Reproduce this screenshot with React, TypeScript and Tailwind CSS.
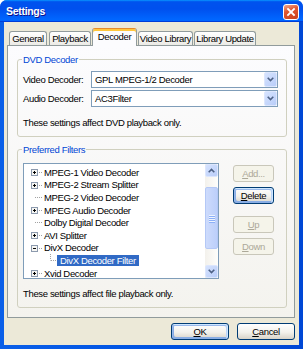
import React from "react";

const FONT =
  "font-['Liberation_Sans',Arial,sans-serif] text-[9.5px] leading-[11px] tracking-[-0.35px] text-black";

function Chevron({ up = false, color = "#4d6185" }: { up?: boolean; color?: string }) {
  return (
    <svg width="7" height="5" viewBox="0 0 7 5" className={up ? "rotate-180" : ""}>
      <path d="M0.7 0.8 L3.5 3.6 L6.3 0.8" fill="none" stroke={color} strokeWidth="1.6" />
    </svg>
  );
}

function CloseButton() {
  return (
    <div className="w-[16px] h-[16px] mt-[2px] rounded-[3px] border border-white flex items-center justify-center bg-[linear-gradient(160deg,#f0a78e,#e0562f_40%,#c9421d)]">
      <svg width="10" height="10" viewBox="0 0 10 10">
        <path d="M2 2 L8 8 M8 2 L2 8" stroke="white" strokeWidth="1.8" strokeLinecap="square" />
      </svg>
    </div>
  );
}

function Tab({ label, selected, w }: { label: string; selected?: boolean; w: string }) {
  if (selected) {
    return (
      <div
        className={`${w} h-[18px] -mb-px relative z-10 flex items-center justify-center pb-[2px] border border-b-0 border-[#919b9c] border-t-[#e68b2c] rounded-t-[3px] bg-[#fcfcfe] shadow-[inset_0_2px_#ffc73c]`}
      >
        {label}
      </div>
    );
  }
  return (
    <div
      className={`${w} h-[14px] flex items-center justify-center border border-b-0 border-[#919b9c] rounded-t-[3px] bg-[linear-gradient(180deg,#ffffff,#ecebe6)]`}
    >
      {label}
    </div>
  );
}

function Select({ value }: { value: string }) {
  return (
    <div className="h-[17px] border border-[#7f9db9] bg-white flex items-center">
      <span className="flex-1 pl-[3px] truncate">{value}</span>
      <div className="w-[13px] h-[15px] rounded-[2px] border border-[#dce6fd] bg-[linear-gradient(135deg,#d6e3fe,#b9cdf9)] flex items-center justify-center">
        <Chevron />
      </div>
    </div>
  );
}

function XPButton({
  children,
  disabled,
  focus,
  className = "",
}: {
  children: React.ReactNode;
  disabled?: boolean;
  focus?: boolean;
  className?: string;
}) {
  const base = "h-[17px] flex items-center justify-center rounded-[3px] border";
  const look = disabled
    ? "border-[#c9c7ba] text-[#aca899] bg-[#f5f4ea]"
    : "border-[#003c74] bg-[linear-gradient(180deg,#ffffff,#f3f2ec_55%,#d8d3c8)]";
  const glow = focus
    ? "shadow-[inset_-1px_1px_#cee7ff,inset_1px_2px_#98b8ea,inset_-2px_2px_#bcd4f6,inset_1px_-1px_#89ade4,inset_2px_-2px_#89ade4]"
    : "";
  return <div className={`${base} ${look} ${glow} ${className}`}>{children}</div>;
}

type Row = { label: string; exp?: "+" | "-"; child?: boolean; selected?: boolean };

const rows: Row[] = [
  { label: "MPEG-1 Video Decoder", exp: "+" },
  { label: "MPEG-2 Stream Splitter", exp: "+" },
  { label: "MPEG-2 Video Decoder" },
  { label: "MPEG Audio Decoder", exp: "+" },
  { label: "Dolby Digital Decoder" },
  { label: "AVI Splitter", exp: "+" },
  { label: "DivX Decoder", exp: "-" },
  { label: "DivX Decoder Filter", child: true, selected: true },
  { label: "Xvid Decoder", exp: "+" },
];

const RH = 12.6;

function Connector({ row }: { row: Row }) {
  const cy = 6.5;
  if (row.child) {
    return (
      <svg width="33" height={RH} viewBox={`0 0 33 ${RH}`} className="shrink-0">
        <line x1="26.5" y1="0" x2="26.5" y2={cy} stroke="#a0a0a0" strokeDasharray="1 1" />
        <line x1="27" y1={cy} x2="33" y2={cy} stroke="#a0a0a0" strokeDasharray="1 1" />
      </svg>
    );
  }
  return (
    <svg width="20" height={RH} viewBox={`0 0 20 ${RH}`} className="shrink-0">
      <line x1="11" y1={cy} x2="19" y2={cy} stroke="#a0a0a0" strokeDasharray="1 1" />
      {row.exp && (
        <g>
          <rect x="7.5" y="3.5" width="6" height="6" fill="#f6f6f3" stroke="#8c9aae" />
          <line x1="9" y1={cy} x2="12" y2={cy} stroke="#000" />
          {row.exp === "+" && <line x1="10.5" y1="5" x2="10.5" y2="8" stroke="#000" />}
        </g>
      )}
    </svg>
  );
}

function Tree() {
  return (
    <div className="w-[196px] h-[116px] border border-[#7f9db9] bg-white flex overflow-hidden">
      <div className="flex-1 pt-[2px] overflow-hidden">
        {rows.map((r) => (
          <div key={r.label} className="h-[12.6px] flex items-center whitespace-nowrap">
            <Connector row={r} />
            {r.selected ? (
              <span className="h-[11px] px-[3px] bg-[#316ac5] text-white">{r.label}</span>
            ) : (
              <span>{r.label}</span>
            )}
          </div>
        ))}
      </div>
      <div className="w-[13px] flex flex-col bg-[linear-gradient(90deg,#f3f1ec,#fefefb)]">
        <div className="h-[13px] rounded-[2px] border border-[#dce6fd] bg-[linear-gradient(135deg,#d6e3fe,#b9cdf9)] flex items-center justify-center">
          <Chevron up />
        </div>
        <div className="h-[10px]" />
        <div className="h-[62px] rounded-[2px] border border-[#b4c8f6] bg-[linear-gradient(90deg,#cddbfc,#bccffa)] flex items-center justify-center">
          <div className="flex flex-col gap-[1px]">
            <div className="w-[6px] h-[1px] bg-[#eef4fe] shadow-[0_1px_#8cb0f8]" />
            <div className="w-[6px] h-[1px] bg-[#eef4fe] shadow-[0_1px_#8cb0f8]" />
            <div className="w-[6px] h-[1px] bg-[#eef4fe] shadow-[0_1px_#8cb0f8]" />
            <div className="w-[6px] h-[1px] bg-[#eef4fe] shadow-[0_1px_#8cb0f8]" />
          </div>
        </div>
        <div className="flex-1" />
        <div className="h-[13px] rounded-[2px] border border-[#dce6fd] bg-[linear-gradient(135deg,#d6e3fe,#b9cdf9)] flex items-center justify-center">
          <Chevron />
        </div>
      </div>
    </div>
  );
}

export default function App() {
  return (
    <div className={`w-[303px] h-[349px] flex flex-col bg-[#0054e3] rounded-t-[7px] overflow-hidden ${FONT}`}>
      {/* Title bar */}
      <div className="h-[22px] shrink-0 flex items-center justify-between pl-[6px] pr-[4px] bg-[linear-gradient(180deg,#0997ff,#0053ee_8%,#0050ee_40%,#0066ff_88%,#0066ff_93%,#005bff_95%,#003dd7_96%,#003dd7)]">
        <span className="text-white font-bold text-[10.5px] tracking-[-0.3px] [text-shadow:1px_1px_#0f1089]">
          Settings
        </span>
        <CloseButton />
      </div>

      {/* Frame + client */}
      <div className="flex-1 flex px-[4px] pb-[4px] bg-[linear-gradient(90deg,#0a5fe8,#0054e3_50%,#0047d5)]">
        <div className="flex-1 flex flex-col bg-[#ece9d8] pt-[6px] pl-[3px] pr-[4px]">
          {/* Tabs */}
          <div className="h-[17px] flex items-end pl-[2px]">
            <Tab label="General" w="w-[38px]" />
            <div className="w-[2px]" />
            <Tab label="Playback" w="w-[42px]" />
            <div className="w-[1px]" />
            <Tab label="Decoder" w="w-[45px]" selected />
            <div className="w-[1px]" />
            <Tab label="Video Library" w="w-[55px]" />
            <div className="w-[1px]" />
            <Tab label="Library Update" w="w-[62px]" />
          </div>

          {/* Tab panel */}
          <div className="h-[273px] shrink-0 border border-[#919b9c] bg-[linear-gradient(180deg,#fcfcfe,#f4f3ee)] pt-[8px] pl-[9px] pr-[7px] pb-[9px] flex flex-col">
            <fieldset className="border border-[#d0d0bf] rounded-[3px]">
              <legend className="ml-[4px] px-[1px] text-[#0046d5]">DVD Decoder</legend>
              <div className="pl-[5px] pr-[8px] pt-[6px] pb-[8px]">
                <div className="grid grid-cols-[68px_1fr] gap-y-[2px] items-center">
                  <span>Video Decoder:</span>
                  <Select value="GPL MPEG-1/2 Decoder" />
                  <span>Audio Decoder:</span>
                  <Select value="AC3Filter" />
                </div>
                <div className="mt-[10px]">These settings affect DVD playback only.</div>
              </div>
            </fieldset>

            <fieldset className="mt-[7px] border border-[#d0d0bf] rounded-[3px]">
              <legend className="ml-[4px] px-[1px] text-[#0046d5]">Preferred Filters</legend>
              <div className="pl-[5px] pr-[12px] pt-[8px] pb-[8px]">
                <div className="flex">
                  <Tree />
                  <div className="ml-[14px] w-[41px] pt-[2px] flex flex-col">
                    <XPButton disabled>
                      <span>
                        <u>A</u>dd...
                      </span>
                    </XPButton>
                    <XPButton focus className="mt-[5px]">
                      <span>
                        <u>D</u>elete
                      </span>
                    </XPButton>
                    <XPButton disabled className="mt-[12px]">
                      <span>
                        <u>U</u>p
                      </span>
                    </XPButton>
                    <XPButton disabled className="mt-[5px]">
                      <span>
                        <u>D</u>own
                      </span>
                    </XPButton>
                  </div>
                </div>
                <div className="mt-[9px]">These settings affect file playback only.</div>
              </div>
            </fieldset>
          </div>

          {/* Dialog buttons */}
          <div className="mt-[5px] flex justify-end gap-[8px]">
            <XPButton focus className="w-[58px]">
              <span>
                <u>O</u>K
              </span>
            </XPButton>
            <XPButton className="w-[58px]">
              <span>
                <u>C</u>ancel
              </span>
            </XPButton>
          </div>
        </div>
      </div>
    </div>
  );
}
